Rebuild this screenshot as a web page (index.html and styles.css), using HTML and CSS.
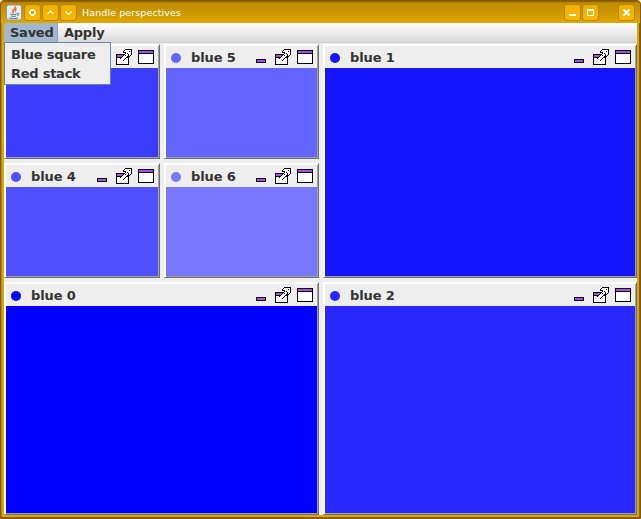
FILE: index.html
```html
<!DOCTYPE html>
<html lang="en">
<head>
<meta charset="utf-8">
<title>Handle perspectives</title>
<link rel="stylesheet" href="styles.css">
</head>
<body>
<svg width="0" height="0" class="defs" shape-rendering="crispEdges">
  <symbol id="min" viewBox="0 0 10 4"><path d="M0 0h10v4H0z" fill="#000"/><path d="M1 1h8v2H1z" fill="#b048f0"/></symbol>
  <symbol id="ext" viewBox="0 0 16 16">
    <path d="M0 5h13v11H0z" fill="#000"/><path d="M1 6h11v2H1z" fill="#b048f0"/><path d="M1 9h11v6H1z" fill="#fff"/>
    <path d="M8 0h8v6h-1v1h-1v1h-1V7h-1v1h-1v1h-1v1H9v1H8v1H6v-1H4V9h1V8h1V7h1V6h1V5h1V4H8V3H7V1h1z" fill="#fff"/>
    <path d="M9 0h7v6h-1V1H9zM8 1h1v1H8zM7 2h1v1h2v1H7zM9 4h1v1H9zM8 5h1v1H8zM7 6h1v1H7zM6 7h1v1H6zM5 8h1v1H5zM4 9h1v1H4zM14 6h1v1h-1zM13 7h1v1h-1zM12 5h1v2h-1zM11 7h1v1h-1zM10 8h1v1h-1zM9 9h1v1H9zM8 10h1v1H8zM7 11h1v1H7zM13 2h1v1h-1zM11 4h1v1h-1zM9 6h1v1H9z" fill="#000"/>
  </symbol>
  <symbol id="max" viewBox="0 0 16 14"><path d="M0 0h16v14H0z" fill="#000"/><path d="M1 1h14v2H1z" fill="#b048f0"/><path d="M1 4h14v9H1z" fill="#fff"/></symbol>
</svg>
<div class="window">
  <header class="titlebar">
    <svg class="java" viewBox="0 0 16 16"><rect x=".5" y=".5" width="15" height="15" rx="2" fill="#e8edf0" stroke="#8796a2"/><path d="M8.500 2q2 1.500-.5 3.200t0 3.300M10.500 4q-2 1.500-.5 3" fill="none" stroke="#ed6b27" stroke-width="1.500"/><path d="M4 9.500q4 1 7 0M5 11.500q3 1 5 0M3 13.500q5 1.200 9 0M11 9q3-.5 1.500 1.500l-1.500.8" fill="none" stroke="#527b9d"/></svg>
    <span class="wbtn"><svg viewBox="0 0 17 17"><path d="M7 5h3v1h1v1h1v3h-1v1h-1v1H7v-1H6v-1H5V7h1V6h1z" fill="#fff"/><path d="M7 7h3v3H7z" fill="#e8a800"/></svg></span>
    <span class="wbtn"><svg viewBox="0 0 17 17"><path d="M5.500 10l3-3 3 3" fill="none" stroke="#fff" stroke-width="1.100"/></svg></span>
    <span class="wbtn"><svg viewBox="0 0 17 17"><path d="M5.500 7.500l3 3 3-3" fill="none" stroke="#fff" stroke-width="1.100"/></svg></span>
    <span class="title">Handle perspectives</span>
    <span class="wbtn"><svg viewBox="0 0 17 17"><path d="M5 10h7v2H5z" fill="#fff"/></svg></span>
    <span class="wbtn"><svg viewBox="0 0 17 17"><path d="M5 5h7v7H5zM6 7v4h5V7z" fill="#fff" fill-rule="evenodd"/></svg></span>
    <span class="wbtn close"><svg viewBox="0 0 17 17"><path d="M5.500 5.500l6 6M11.500 5.500l-6 6" stroke="#fff" stroke-width="2.200"/></svg></span>
  </header>
  <nav class="menubar">
    <div class="menu open">Saved
      <div class="popup"><div>Blue square</div><div>Red stack</div></div>
    </div>
    <div class="menu">Apply</div>
  </nav>
  <main class="grid">
    <section class="panel b3"><h2><i></i><span></span><svg class="min"><use href="#min"/></svg><svg class="ext"><use href="#ext"/></svg><svg class="max"><use href="#max"/></svg></h2><div class="fill"></div></section>
    <section class="panel b5"><h2><i></i><span>blue 5</span><svg class="min"><use href="#min"/></svg><svg class="ext"><use href="#ext"/></svg><svg class="max"><use href="#max"/></svg></h2><div class="fill"></div></section>
    <section class="panel b1"><h2><i></i><span>blue 1</span><svg class="min"><use href="#min"/></svg><svg class="ext"><use href="#ext"/></svg><svg class="max"><use href="#max"/></svg></h2><div class="fill"></div></section>
    <section class="panel b4"><h2><i></i><span>blue 4</span><svg class="min"><use href="#min"/></svg><svg class="ext"><use href="#ext"/></svg><svg class="max"><use href="#max"/></svg></h2><div class="fill"></div></section>
    <section class="panel b6"><h2><i></i><span>blue 6</span><svg class="min"><use href="#min"/></svg><svg class="ext"><use href="#ext"/></svg><svg class="max"><use href="#max"/></svg></h2><div class="fill"></div></section>
    <section class="panel b0"><h2><i></i><span>blue 0</span><svg class="min"><use href="#min"/></svg><svg class="ext"><use href="#ext"/></svg><svg class="max"><use href="#max"/></svg></h2><div class="fill"></div></section>
    <section class="panel b2"><h2><i></i><span>blue 2</span><svg class="min"><use href="#min"/></svg><svg class="ext"><use href="#ext"/></svg><svg class="max"><use href="#max"/></svg></h2><div class="fill"></div></section>
  </main>
</div>
</body>
</html>
```

FILE: styles.css
```css
* { box-sizing: border-box; }
body { margin: 0; overflow: hidden; background: #fff; font-family: "DejaVu Sans", sans-serif; }
.defs { position: absolute; }
.window {
  width: 641px; height: 519px; padding: 0 3px 3px;
  border: 1px solid #7f5a00;
  border-radius: 4px 4px 0 0; background: #dfa500;
  box-shadow: inset -1px -1px #8a6200, inset 1px 1px #b58500;
  display: flex; flex-direction: column;
}
.titlebar {
  height: 22px; flex: none; margin: 0 -3px; padding: 3px 5px 0;
  display: flex; border-radius: 3px 3px 0 0;
  background: linear-gradient(#c08c00, #c99500 45%, #e0a800);
  box-shadow: inset 0 1px #8f6600, inset 0 2px #b48200;
}
.java { width: 16px; height: 17px; margin-right: 2px; }
.wbtn {
  width: 17px; height: 17px; margin-right: 1px; flex: none;
  border: 1px solid #b88300; border-radius: 3px;
  background: linear-gradient(#eeb000, #f6b900);
}
.wbtn svg { display: block; width: 17px; height: 17px; margin: -1px; }
.title { flex: 1; margin-left: 4px; color: #fff; font-size: 9.500px; letter-spacing: .1px; line-height: 18px; white-space: nowrap; }
.close { margin-left: 18px; margin-right: 0; }
.menubar {
  height: 20px; flex: none; width: 633px; display: flex;
  background: linear-gradient(#fff, #dadada); border-bottom: 1px solid #ccc;
  font-size: 13px; font-weight: bold; line-height: 19px; color: #333; letter-spacing: -.25px;
}
.menu { position: relative; padding: 0 6px; height: 19px; white-space: nowrap; }
.menu.open { width: 54px; background: #a3b8cc; border-right: 1px solid #8fa3b8; }
.popup {
  position: absolute; left: 0; top: 19px; z-index: 2; width: 107px; height: 43px;
  padding: 2px 6px; background: #eee; border: 1px solid #6382bf; line-height: 19px;
}
.popup div { height: 19px; }
.grid {
  width: 633px; height: 472px; padding-top: 1px; background: #eee;
  display: grid; grid-template-columns: 156px 155px 314px; grid-template-rows: 115px 115px 233px;
  gap: 4px;
}
.panel {
  padding: 1px; border: 1px solid; border-color: #fff #707070 #707070 #fff;
  box-shadow: inset 1px 1px #fff, inset -1px -1px #a0a0a0;
  display: flex; flex-direction: column;
}
.panel h2 {
  margin: 0; height: 22px; flex: none; padding: 0 4px; background: #eee;
  display: flex; color: #333; font-size: 13px; line-height: 23px; letter-spacing: -.1px;
}
.panel i { width: 10px; height: 10px; margin: 6.500px 10.500px 0 .5px; border-radius: 50%; background: var(--c); }
.panel span { flex: 1; white-space: nowrap; }
.panel h2 svg { flex: none; }
.panel .min { width: 10px; height: 4px; margin: 13px 9px 0 0; }
.panel .ext { width: 16px; height: 16px; margin: 3px 6px 0 0; }
.panel .max { width: 16px; height: 14px; margin-top: 4px; }
.fill { flex: 1; background: var(--c); }
.b0 { --c: #00f; grid-column: 1 / 3; }
.b1 { --c: #1414ff; grid-column: 3; grid-row: 1 / 3; }
.b2 { --c: #2828ff; }
.b3 { --c: #3c3cff; }
.b4 { --c: #5050ff; }
.b5 { --c: #6464ff; }
.b6 { --c: #7878ff; }
```
